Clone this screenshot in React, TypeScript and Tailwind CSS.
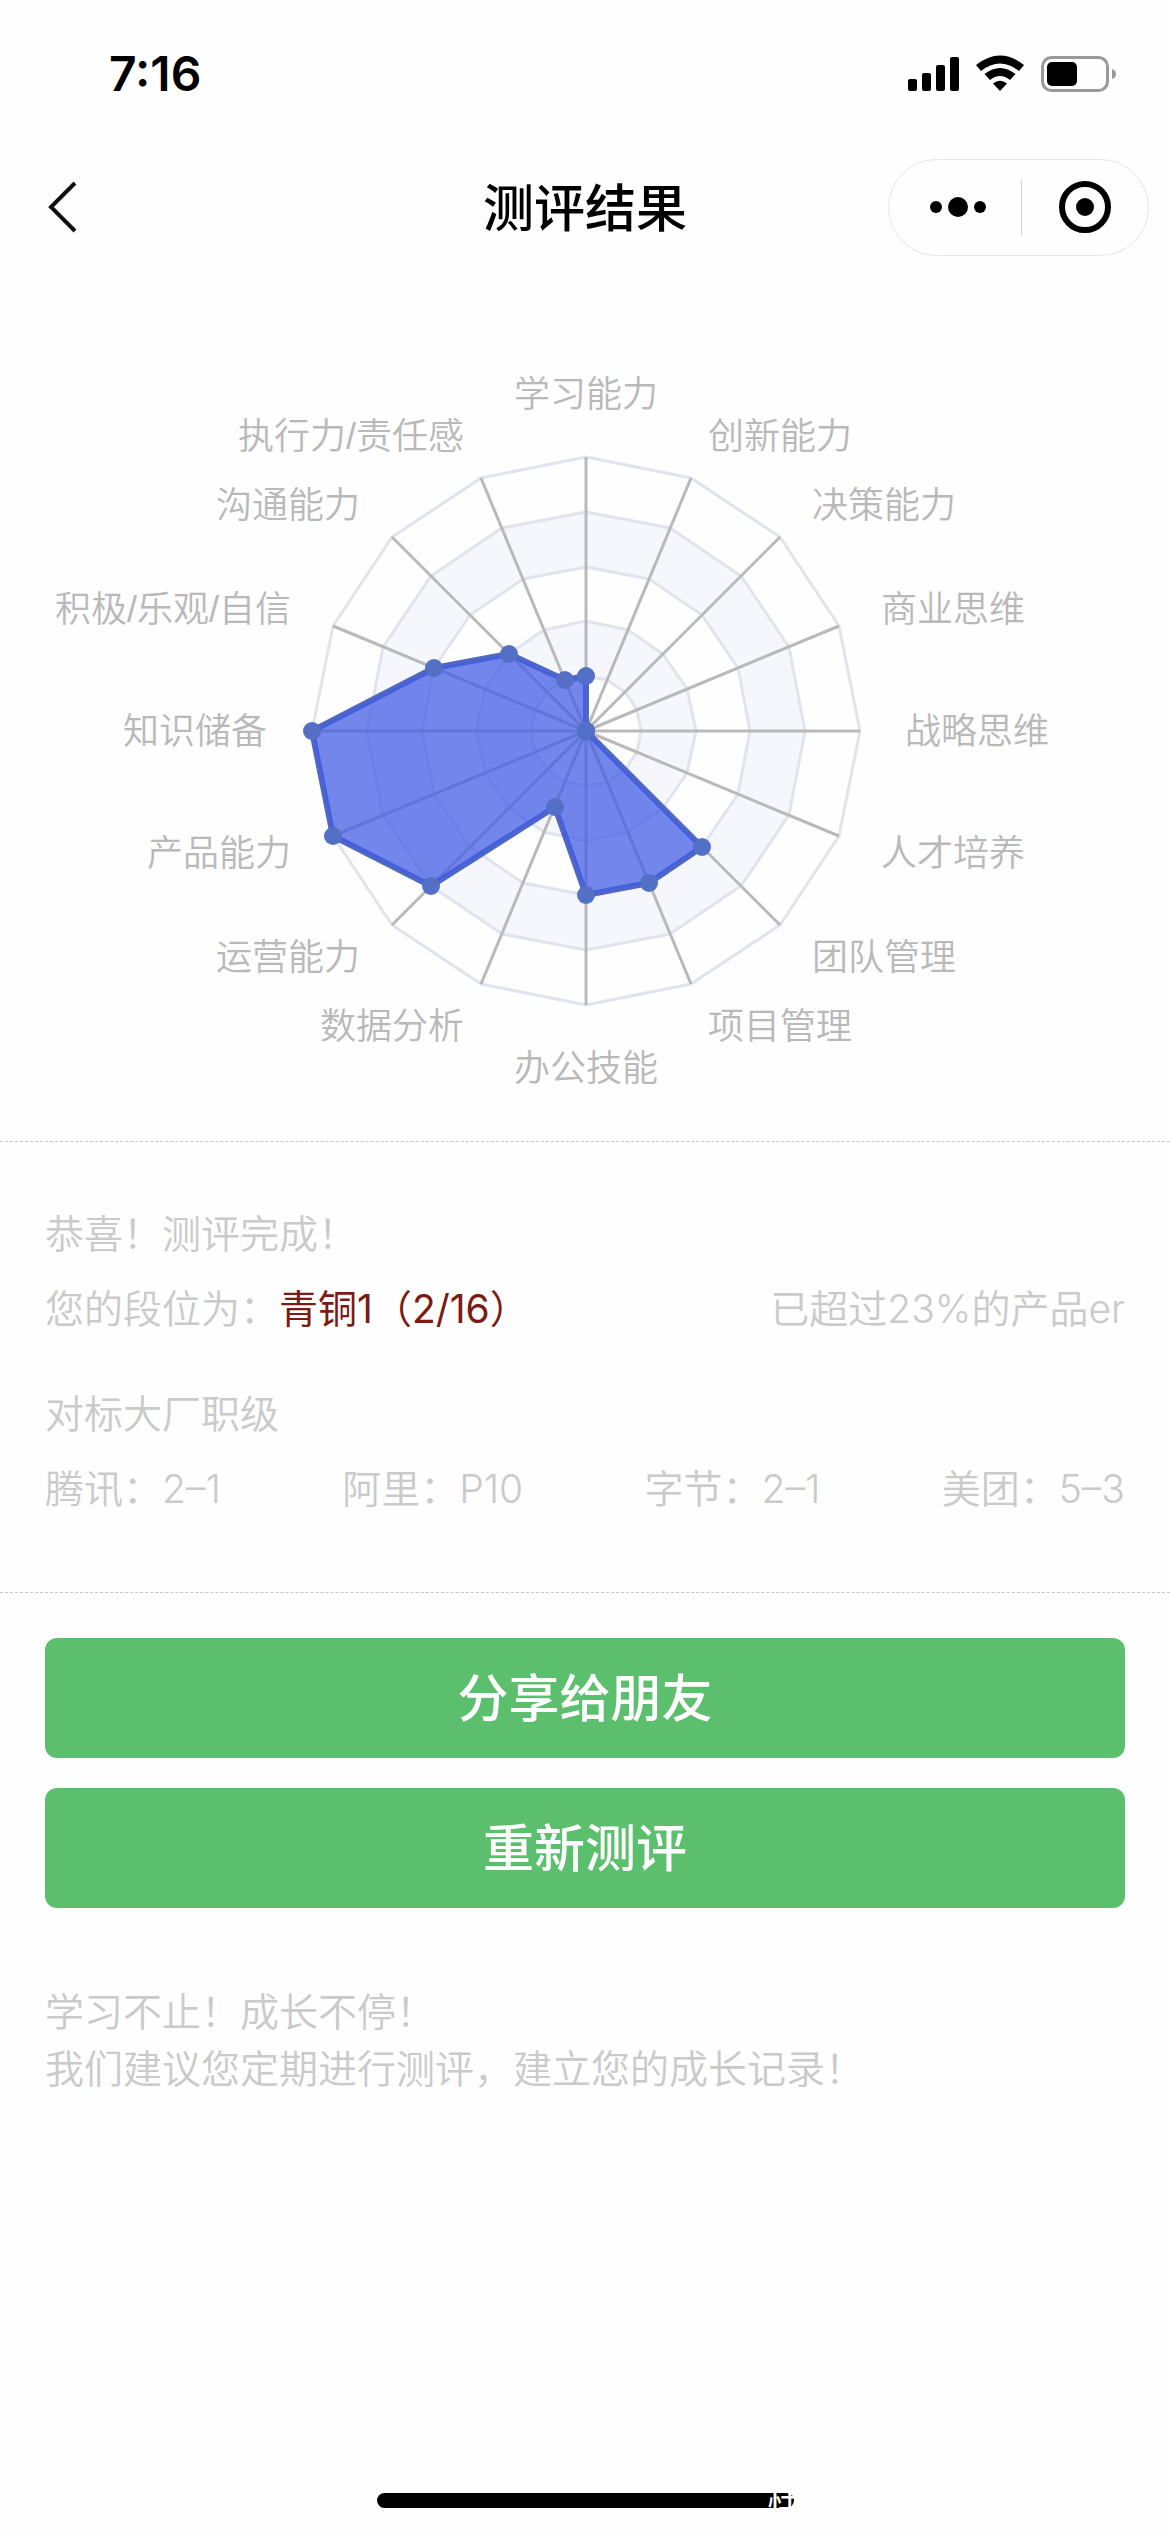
import React from "react";

const CX = 586;
const CY = 465;
const RADIUS = 274;
const LABEL_RADIUS = 319;

const skills: { name: string; value: number }[] = [
  { name: "学习能力", value: 0.2 },
  { name: "创新能力", value: 0 },
  { name: "决策能力", value: 0 },
  { name: "商业思维", value: 0 },
  { name: "战略思维", value: 0 },
  { name: "人才培养", value: 0 },
  { name: "团队管理", value: 0.6 },
  { name: "项目管理", value: 0.6 },
  { name: "办公技能", value: 0.6 },
  { name: "数据分析", value: 0.3 },
  { name: "运营能力", value: 0.8 },
  { name: "产品能力", value: 1 },
  { name: "知识储备", value: 1 },
  { name: "积极/乐观/自信", value: 0.6 },
  { name: "沟通能力", value: 0.4 },
  { name: "执行力/责任感", value: 0.2 },
];

const rings = [
  { scale: 1, fill: "#fefefe" },
  { scale: 0.8, fill: "#f5f7fc" },
  { scale: 0.6, fill: "#fefefe" },
  { scale: 0.4, fill: "#f5f7fc" },
  { scale: 0.2, fill: "#fefefe" },
];

const levels = [
  { company: "腾讯", level: "2–1" },
  { company: "阿里", level: "P10" },
  { company: "字节", level: "2–1" },
  { company: "美团", level: "5–3" },
];

function point(index: number, r: number): [number, number] {
  const a = (index / skills.length) * Math.PI * 2;
  return [Math.round(CX + Math.sin(a) * r), Math.round(CY - Math.cos(a) * r)];
}

function outline(radiusAt: (index: number) => number) {
  return skills.map((_, i) => point(i, radiusAt(i)).join(",")).join(" ");
}

function RadarChart() {
  const shape = outline((i) => skills[i].value * RADIUS);
  return (
    <svg viewBox="0 0 1170 875" className="block h-auto w-full" role="img" aria-label="能力雷达图">
      {rings.map((ring) => (
        <polygon
          key={ring.scale}
          points={outline(() => ring.scale * RADIUS)}
          fill={ring.fill}
          stroke="#e1e3ed"
          strokeWidth="3"
        />
      ))}
      {skills.map((s, i) => {
        const [x, y] = point(i, RADIUS);
        return <line key={s.name} x1={CX} y1={CY} x2={x} y2={y} stroke="#b9b9b9" strokeWidth="3" />;
      })}
      <polygon points={shape} fill="none" stroke="#4f68c4" strokeWidth="6" strokeLinejoin="bevel" />
      <polygon points={shape} fill="#435de6" fillOpacity="0.75" />
      {skills.map((s, i) => {
        const [x, y] = point(i, s.value * RADIUS);
        return <circle key={s.name} cx={x} cy={y} r="9" fill="#5470c6" />;
      })}
      {skills.map((s, i) => {
        const [x, y] = point(i, LABEL_RADIUS);
        const vertical = i % 8 === 0;
        const anchor = vertical ? "middle" : i < 8 ? "start" : "end";
        const shift = i === 0 ? -5 : i === 8 ? 31 : 13;
        return (
          <text
            key={s.name}
            x={x}
            y={y + shift}
            textAnchor={anchor}
            className="fill-[#b9b9b9] font-['Liberation_Sans','Noto_Sans_CJK_SC',sans-serif] text-[36px] font-[350]"
          >
            {s.name}
          </text>
        );
      })}
    </svg>
  );
}

function StatusBar() {
  return (
    <div className="flex h-[148px] items-center justify-between pr-[53px] pl-[109px]">
      <time className="font-['Inter',sans-serif] text-[48px] leading-[56px] font-semibold text-black">7:16</time>
      <svg width="209" height="40" viewBox="0 0 209 40" aria-hidden="true">
        <rect x="0" y="25" width="9" height="12" rx="2" />
        <rect x="14" y="19" width="9" height="18" rx="2" />
        <rect x="28" y="11" width="9" height="26" rx="2" />
        <rect x="42" y="3" width="9" height="34" rx="2" />
        <path d="M68 11 Q92 -8 116 11 L111 17 Q92 2 73 17 Z" />
        <path d="M76.500 20 Q92 8 107.500 20 L102 26 Q92 18 82 26 Z" />
        <path d="M85 29.500 Q92 24 99 29.500 L92 37 Z" />
        <rect x="134.500" y="3.500" width="65" height="33" rx="9" fill="none" stroke="#999" strokeWidth="3" />
        <rect x="139" y="8" width="30" height="24" rx="5" />
        <path d="M204 15 Q208 16 208 20 Q208 24 204 25 Z" fill="#999" />
      </svg>
    </div>
  );
}

function NavBar() {
  return (
    <header className="grid h-[118px] grid-cols-[1fr_auto_1fr] items-center pr-[21px] pl-[42px]">
      <button type="button" aria-label="返回" className="justify-self-start">
        <svg width="40" height="60" viewBox="0 0 40 60" fill="none" stroke="#111" strokeWidth="4">
          <path d="M33 6 L9 30 L33 54" />
        </svg>
      </button>
      <h1 className="-ml-[21px] pt-1 text-[51px] leading-[72px] font-medium text-black">测评结果</h1>
      <div className="flex h-[97px] w-[261px] items-center justify-self-end rounded-full border border-[#e6e6e6]">
        <button type="button" aria-label="更多" className="flex flex-1 justify-center pl-[6px]">
          <svg width="60" height="30" viewBox="0 0 60 30">
            <circle cx="8" cy="15" r="6" />
            <circle cx="30" cy="15" r="10" />
            <circle cx="52" cy="15" r="6" />
          </svg>
        </button>
        <span className="h-[57px] w-px bg-[#d5d5d5]" />
        <button type="button" aria-label="关闭" className="flex flex-1 justify-center">
          <svg width="54" height="54" viewBox="0 0 54 54">
            <circle cx="27" cy="27" r="23" fill="none" stroke="#000" strokeWidth="6" />
            <circle cx="27" cy="27" r="9" />
          </svg>
        </button>
      </div>
    </header>
  );
}

export default function App() {
  return (
    <div className="flex min-h-screen flex-col bg-[#fefefe] font-['Inter','Noto_Sans_CJK_SC',sans-serif]" lang="zh-CN">
      <StatusBar />
      <NavBar />
      <main className="text-[39px] leading-[55px] font-[350] text-[#cacaca]">
        <RadarChart />
        <section className="border-y border-dashed border-[#c8c8c8] px-[45px] pt-[64px] pb-[76px]">
          <p>恭喜！测评完成！</p>
          <div className="mt-5 flex justify-between">
            <p>
              您的段位为：<strong className="font-normal text-[#7b1c14]">青铜1（2/16）</strong>
            </p>
            <p>已超过23%的产品er</p>
          </div>
          <h2 className="mt-[50px]">对标大厂职级</h2>
          <ul className="mt-5 flex justify-between">
            {levels.map((l) => (
              <li key={l.company}>
                {l.company}：{l.level}
              </li>
            ))}
          </ul>
        </section>
        <div className="flex flex-col gap-[30px] px-[45px] pt-[45px]">
          <button type="button" className="h-[120px] rounded-xl bg-[#5bbf6e] text-[51px] font-medium text-white">
            分享给朋友
          </button>
          <button type="button" className="h-[120px] rounded-xl bg-[#5bbf6e] text-[51px] font-medium text-white">
            重新测评
          </button>
        </div>
        <p className="px-[45px] pt-[75px] leading-[57px]">
          学习不止！成长不停！
          <br />
          我们建议您定期进行测评，建立您的成长记录！
        </p>
      </main>
      <div className="mt-auto flex justify-center pb-6">
        <div className="relative h-[15px] w-[417px] rounded-full bg-black">
          <span className="absolute -top-[3px] right-[-10px] text-[36px] leading-[36px] text-white">快</span>
        </div>
      </div>
    </div>
  );
}
